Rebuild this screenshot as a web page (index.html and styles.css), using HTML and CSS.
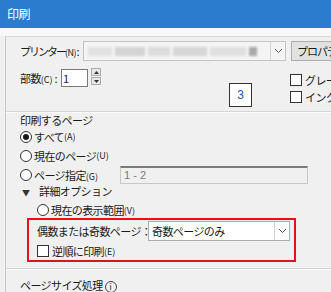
FILE: index.html
```html
<!DOCTYPE html>
<html lang="ja">
<head>
  <meta charset="UTF-8" />
  <title>印刷</title>
  <link rel="stylesheet" href="styles.css">
</head>
<body>
  <div class="titlebar">印刷</div>
  <div class="topstrip"></div>

  <div class="panel">
    <div class="printer-row">
      <span class="label printer-label">プリンター<span class="key">(N)</span>&nbsp;:</span>
      <div class="combo">
        <div class="masked">
          <span class="m1"></span><span class="m2"></span><span class="m3"></span><span class="m4"></span><span class="m5"></span><span class="m6"></span>
        </div>
        <div class="combo-arrow">
          <svg width="9" height="6" viewBox="0 0 9 6"><path d="M1 1l3.5 3.5L8 1" fill="none" stroke="#555" stroke-width="1"/></svg>
        </div>
      </div>
      <button class="btn">プロパティ</button>
    </div>

    <div class="copies-area">
      <div class="copies">
        <span class="label copies-label">部数<span class="key">(C)</span> :</span>
        <div class="num">1</div>
        <div class="spin">
          <span><svg width="5" height="3" viewBox="0 0 5 3"><path d="M0 3h5L2.5 0z" fill="#333"/></svg></span>
          <span><svg width="5" height="3" viewBox="0 0 5 3"><path d="M0 0h5L2.5 3z" fill="#333"/></svg></span>
        </div>
      </div>
      <div class="marker">3</div>
      <div class="options">
        <div class="check"><span class="box"></span>グレースケール</div>
        <div class="check"><span class="box"></span>インク/トナーの節約</div>
      </div>
    </div>

    <div class="sep"></div>

    <div class="pages">
      <div class="heading">印刷するページ</div>
      <div class="radio-row"><span class="radio on"></span>すべて<span class="key">(A)</span></div>
      <div class="radio-row"><span class="radio"></span>現在のページ<span class="key">(U)</span></div>
      <div class="radio-row">
        <span class="radio"></span><span class="range-label">ページ指定<span class="key">(G)</span></span>
        <div class="range">1 - 2</div>
      </div>
      <div class="details"><span class="tri">▼</span>詳細オプション</div>
      <div class="radio-row sub view-row"><span class="radio"></span>現在の表示範囲<span class="key">(V)</span></div>

      <div class="highlight">
        <div class="odd-row">
          <span class="odd-label">偶数または奇数ページ：</span>
          <div class="select">
            <span class="select-text">奇数ページのみ</span>
            <div class="combo-arrow">
              <svg width="9" height="6" viewBox="0 0 9 6"><path d="M1 1l3.5 3.5L8 1" fill="none" stroke="#555" stroke-width="1"/></svg>
            </div>
          </div>
        </div>
        <div class="check reverse"><span class="box"></span>逆順に印刷<span class="key">(E)</span></div>
      </div>
    </div>

    <div class="sep lower"></div>
    <div class="heading size-heading">ページサイズ処理 <span class="info">i</span></div>
  </div>
</body>
</html>
```

FILE: styles.css
```css
body {
  margin: 0;
  width: 331px;
  height: 292px;
  overflow: hidden;
  background: #f0f0f0;
  color: #1a1a1a;
  font-family: "Noto Sans CJK JP", "Noto Sans", sans-serif;
  font-size: 11px;
  letter-spacing: -0.6px;
  white-space: nowrap;
}
.titlebar {
  height: 28px;
  line-height: 28px;
  padding-left: 7px;
  background: #2b7bcf;
  color: #fff;
  font-size: 12px;
}
.topstrip {
  height: 8px;
  background: #f8f8f8;
}
.panel {
  margin-left: 5px;
  padding-left: 14px;
  border-left: 1px solid #c9c9c9;
  border-top: 1px solid #d9d9d9;
}
.key {
  font-size: 9px;
  letter-spacing: 0;
}
.label {
  display: inline-block;
  line-height: 20px;
}

/* printer */
.printer-row {
  display: flex;
  margin-top: 4px;
  height: 20px;
}
.printer-row > *,
.copies-area > *,
.radio-row > *,
.odd-row > * {
  flex-shrink: 0;
}
.printer-label {
  width: 63px;
  letter-spacing: -2px;
}
.printer-label .key {
  letter-spacing: -0.5px;
}
.combo {
  display: flex;
  width: 201px;
  height: 18px;
  border: 1px solid #c4c4c4;
  background: #f4f4f4;
  margin-right: 5px;
}
.masked {
  flex: 1;
  display: flex;
  align-items: center;
  gap: 3px;
  padding-left: 4px;
  filter: blur(1px);
}
.masked span {
  height: 9px;
  background: #d9d9d9;
}
.masked .m1 { width: 24px; background: #e2e2e2; }
.masked .m2 { width: 30px; background: #d4d4d4; }
.masked .m3 { width: 22px; background: #dcdcdc; }
.masked .m4 { width: 34px; background: #d7d7d7; }
.masked .m5 { width: 36px; background: #e0e0e0; }
.masked .m6 { width: 8px; background: #a9a9a9; }
.combo-arrow {
  width: 14px;
  border-left: 1px solid #d3d3d3;
  display: flex;
  align-items: center;
  justify-content: center;
}
.btn {
  width: 70px;
  height: 20px;
  padding: 0 0 0 5px;
  text-align: left;
  border: 1px solid #adadad;
  background: #e1e1e1;
  font: inherit;
  letter-spacing: -1px;
  color: #1a1a1a;
}

/* copies */
.copies-area {
  position: relative;
  display: flex;
  height: 50px;
}
.copies {
  display: flex;
  margin-top: 7px;
  height: 19px;
}
.copies-label {
  width: 41px;
}
.num {
  width: 24px;
  height: 16px;
  margin-top: 1px;
  padding-left: 1px;
  line-height: 16px;
  border: 1px solid #7a7a7a;
  background: #fff;
  letter-spacing: 0;
}
.spin {
  display: flex;
  flex-direction: column;
  gap: 1px;
  margin-left: 3px;
}
.spin span {
  width: 8px;
  height: 6px;
  border: 1px solid #adadad;
  background: #e6e6e6;
  display: flex;
  align-items: center;
  justify-content: center;
}
.marker {
  position: absolute;
  left: 209px;
  top: 22px;
  width: 21px;
  height: 22px;
  border: 1px solid #333;
  background: #fff;
  color: #1f58a8;
  text-align: center;
  line-height: 22px;
  font-family: "Liberation Sans", sans-serif;
  font-size: 12px;
  letter-spacing: 0;
}
.options {
  margin-left: 189px;
  margin-top: 10px;
}
.check {
  display: flex;
  align-items: center;
  height: 17px;
}
.box {
  width: 10px;
  height: 10px;
  border: 1px solid #333;
  background: #fff;
  margin-right: 3px;
}

/* separators */
.sep {
  margin-left: -14px;
  height: 0;
  border-top: 1px solid #d5d5d5;
  border-bottom: 1px solid #fbfbfb;
}
.sep.lower {
  margin-top: 6px;
}

/* pages */
.heading {
  height: 14px;
  line-height: 14px;
}
.radio-row {
  display: flex;
  align-items: center;
  height: 19px;
}
.radio {
  width: 10px;
  height: 10px;
  border: 1px solid #333;
  border-radius: 50%;
  background: #fff;
  margin-right: 2px;
  position: relative;
}
.radio.on::after {
  content: "";
  position: absolute;
  left: 2px;
  top: 2px;
  width: 6px;
  height: 6px;
  border-radius: 50%;
  background: #1a1a1a;
}
.range-label {
  width: 86px;
}
.range {
  width: 183px;
  height: 15px;
  line-height: 15px;
  padding-left: 3px;
  border: 1px solid #c8c8c8;
  border-top: 2px solid #7a7a7a;
  color: #7a7a7a;
  letter-spacing: 0;
  font-family: "Liberation Sans", sans-serif;
}
.details {
  height: 14px;
  line-height: 14px;
}
.tri {
  display: inline-block;
  width: 17px;
  padding-left: 2px;
  font-size: 8px;
  letter-spacing: 0;
  color: #333;
}
.radio-row.sub {
  padding-left: 17px;
}
.view-row {
  height: 16px;
  padding-top: 4px;
}
.highlight {
  margin-left: 7px;
  width: 257px;
  padding-left: 8px;
  border: 2px solid #e0121b;
}
.odd-row {
  display: flex;
  align-items: center;
  height: 22px;
}
.odd-label {
  width: 111px;
}
.select {
  display: flex;
  width: 140px;
  height: 18px;
  border: 1px solid #adadad;
  background: #fff;
}
.select-text {
  flex: 1;
  padding-left: 3px;
  line-height: 18px;
}
.reverse {
  height: 18px;
}
.size-heading {
  padding-top: 7px;
  height: 16px;
  line-height: 16px;
}
.info {
  display: inline-block;
  width: 10px;
  height: 10px;
  border: 1px solid #444;
  border-radius: 50%;
  font-size: 8px;
  line-height: 10px;
  text-align: center;
  letter-spacing: 0;
  vertical-align: middle;
}
```
